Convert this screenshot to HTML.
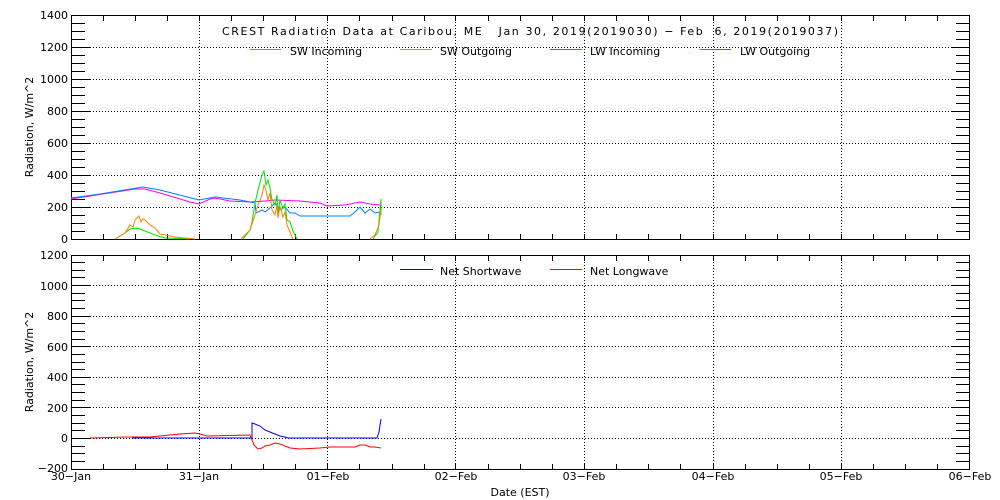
<!DOCTYPE html>
<html><head><style>
html,body{margin:0;padding:0;background:#fff;}
svg{display:block;font-family:"DejaVu Sans","Liberation Sans",sans-serif;}
text{font-size:11px;fill:#000;white-space:pre;}
</style></head><body>
<svg width="1000" height="500" viewBox="0 0 1000 500" xmlns="http://www.w3.org/2000/svg" xml:space="preserve">
<rect width="1000" height="500" fill="#fff"/>
<g stroke="#000" stroke-width="1" fill="none" shape-rendering="crispEdges">
<rect x="71.5" y="15.5" width="898" height="224"/>
<rect x="71.5" y="255.5" width="898" height="214"/>
<path d="M71 239.5h19M71 231.5h14M71 223.5h14M71 215.5h14M71 207.5h19M71 199.5h14M71 191.5h14M71 183.5h14M71 175.5h19M71 167.5h14M71 159.5h14M71 151.5h14M71 143.5h19M71 135.5h14M71 127.5h14M71 119.5h14M71 111.5h19M71 103.5h14M71 95.5h14M71 87.5h14M71 79.5h19M71 71.5h14M71 63.5h14M71 55.5h14M71 47.5h19M71 39.5h14M71 31.5h14M71 23.5h14M71 15.5h19"/>
<path transform="translate(1041,0) scale(-1,1)" d="M71 239.5h19M71 231.5h14M71 223.5h14M71 215.5h14M71 207.5h19M71 199.5h14M71 191.5h14M71 183.5h14M71 175.5h19M71 167.5h14M71 159.5h14M71 151.5h14M71 143.5h19M71 135.5h14M71 127.5h14M71 119.5h14M71 111.5h19M71 103.5h14M71 95.5h14M71 87.5h14M71 79.5h19M71 71.5h14M71 63.5h14M71 55.5h14M71 47.5h19M71 39.5h14M71 31.5h14M71 23.5h14M71 15.5h19"/>
<path d="M71 469.5h19M71 461.5h14M71 453.5h14M71 446.5h14M71 438.5h19M71 430.5h14M71 423.5h14M71 415.5h14M71 407.5h19M71 400.5h14M71 392.5h14M71 384.5h14M71 377.5h19M71 369.5h14M71 362.5h14M71 354.5h14M71 346.5h19M71 339.5h14M71 331.5h14M71 323.5h14M71 316.5h19M71 308.5h14M71 300.5h14M71 293.5h14M71 285.5h19M71 277.5h14M71 270.5h14M71 262.5h14M71 255.5h19"/>
<path transform="translate(1041,0) scale(-1,1)" d="M71 469.5h19M71 461.5h14M71 453.5h14M71 446.5h14M71 438.5h19M71 430.5h14M71 423.5h14M71 415.5h14M71 407.5h19M71 400.5h14M71 392.5h14M71 384.5h14M71 377.5h19M71 369.5h14M71 362.5h14M71 354.5h14M71 346.5h19M71 339.5h14M71 331.5h14M71 323.5h14M71 316.5h19M71 308.5h14M71 300.5h14M71 293.5h14M71 285.5h19M71 277.5h14M71 270.5h14M71 262.5h14M71 255.5h19"/>
<path d="M103.5 16v5M135.5 16v5M167.5 16v5M231.5 16v5M263.5 16v5M295.5 16v5M359.5 16v5M392.5 16v5M424.5 16v5M488.5 16v5M520.5 16v5M552.5 16v5M616.5 16v5M648.5 16v5M680.5 16v5M745.5 16v5M777.5 16v5M809.5 16v5M873.5 16v5M905.5 16v5M937.5 16v5M199.5 16v5M327.5 16v5M455.5 16v5M584.5 16v5M713.5 16v5M841.5 16v5"/>
<path transform="translate(0,240)" d="M103.5 16v5M135.5 16v5M167.5 16v5M231.5 16v5M263.5 16v5M295.5 16v5M359.5 16v5M392.5 16v5M424.5 16v5M488.5 16v5M520.5 16v5M552.5 16v5M616.5 16v5M648.5 16v5M680.5 16v5M745.5 16v5M777.5 16v5M809.5 16v5M873.5 16v5M905.5 16v5M937.5 16v5M199.5 16v5M327.5 16v5M455.5 16v5M584.5 16v5M713.5 16v5M841.5 16v5"/>
<path d="M103.5 239v-5M135.5 239v-5M167.5 239v-5M231.5 239v-5M263.5 239v-5M295.5 239v-5M359.5 239v-5M392.5 239v-5M424.5 239v-5M488.5 239v-5M520.5 239v-5M552.5 239v-5M616.5 239v-5M648.5 239v-5M680.5 239v-5M745.5 239v-5M777.5 239v-5M809.5 239v-5M873.5 239v-5M905.5 239v-5M937.5 239v-5M199.5 239v-5M327.5 239v-5M455.5 239v-5M584.5 239v-5M713.5 239v-5M841.5 239v-5"/>
<path transform="translate(0,230)" d="M103.5 239v-5M135.5 239v-5M167.5 239v-5M231.5 239v-5M263.5 239v-5M295.5 239v-5M359.5 239v-5M392.5 239v-5M424.5 239v-5M488.5 239v-5M520.5 239v-5M552.5 239v-5M616.5 239v-5M648.5 239v-5M680.5 239v-5M745.5 239v-5M777.5 239v-5M809.5 239v-5M873.5 239v-5M905.5 239v-5M937.5 239v-5M199.5 239v-5M327.5 239v-5M455.5 239v-5M584.5 239v-5M713.5 239v-5M841.5 239v-5"/>
</g>
<g stroke="#000" stroke-width="1" stroke-dasharray="1 2" shape-rendering="crispEdges">
<line x1="72" y1="207.5" x2="969" y2="207.5"/><line x1="72" y1="175.5" x2="969" y2="175.5"/>
<line x1="72" y1="143.5" x2="969" y2="143.5"/><line x1="72" y1="111.5" x2="969" y2="111.5"/>
<line x1="72" y1="79.5" x2="969" y2="79.5"/><line x1="72" y1="47.5" x2="969" y2="47.5"/>
<line x1="72" y1="438.5" x2="969" y2="438.5"/><line x1="72" y1="407.5" x2="969" y2="407.5"/>
<line x1="72" y1="377.5" x2="969" y2="377.5"/><line x1="72" y1="346.5" x2="969" y2="346.5"/>
<line x1="72" y1="316.5" x2="969" y2="316.5"/><line x1="72" y1="285.5" x2="969" y2="285.5"/>
<line x1="199.5" y1="16" x2="199.5" y2="239"/><line x1="327.5" y1="16" x2="327.5" y2="239"/>
<line x1="455.5" y1="16" x2="455.5" y2="239"/><line x1="584.5" y1="16" x2="584.5" y2="239"/>
<line x1="713.5" y1="16" x2="713.5" y2="239"/><line x1="841.5" y1="16" x2="841.5" y2="239"/>
<line x1="199.5" y1="256" x2="199.5" y2="469"/><line x1="327.5" y1="256" x2="327.5" y2="469"/>
<line x1="455.5" y1="256" x2="455.5" y2="469"/><line x1="584.5" y1="256" x2="584.5" y2="469"/>
<line x1="713.5" y1="256" x2="713.5" y2="469"/><line x1="841.5" y1="256" x2="841.5" y2="469"/>
</g>
<g fill="none" stroke-width="1">
<polyline stroke="#ff00ff" points="71,199 103,194 135,189 145,189 160,193 190,202 199,204 210,199 215,198 230,201 250,202 265,201 275,200 300,201 320,203 327,206 345,205 360,202 370,204 380,205"/>
<polyline stroke="#0080ff" points="71,198 100,194 143,187 160,190 199,200 215,197 240,200 250,202 255,203 256,213 262,210 265,212 270,208 275,203 280,210 285,207 290,213 295,213 300,216 310,216 350,216 355,212 360,207 365,213 370,209 375,213 380,212"/>
<polyline stroke="#00e000" points="115,239 125,233 130,229 135,228 140,229 145,231 155,235 165,238 190,239"/>
<polyline stroke="#00e000" points="243,239 250,230 252,222 255,203 258,190 262,175 264,171 266,185 268,180 270,188 272,200 275,205 277,195 278,215 280,200 283,208 285,204 287,220 290,222 293,231 297,239"/>
<polyline stroke="#00e000" points="373,239 378,232 380,210 381,199 381,215"/>
<polyline stroke="#ff8000" points="115,239 125,233 130,225 133,227 135,220 139,216 141,222 143,219 145,220 150,225 155,228 160,234 175,237 195,239"/>
<polyline stroke="#ff8000" points="241,239 250,230 255,215 258,205 262,195 264,185 266,190 268,200 270,193 272,210 275,215 277,205 278,218 280,206 283,217 285,212 287,225 290,232 293,239"/>
<polyline stroke="#ff8000" points="370,239 375,235 379,225 381,210"/>
<polyline stroke="#0000ff" points="132,438 251,438 252,439 252,423 255,424 260,426 265,430 270,432 275,434 280,436 285,437 288,438 377,438 379,432 381,419"/>
<polyline stroke="#ff0000" points="90,438 130,437 150,437 180,434 195,433 200,434 207,436 250,435 252,440 254,445 258,449 262,448 265,446 270,445 275,443 280,444 285,446 290,448 300,449 320,448 330,447 340,447 355,447 360,445 365,445 370,447 375,447 381,448"/>
</g>
<g text-anchor="end">
<text x="68" y="19">1400</text><text x="68" y="51">1200</text><text x="68" y="83">1000</text>
<text x="68" y="115">800</text><text x="68" y="147">600</text><text x="68" y="179">400</text>
<text x="68" y="211">200</text><text x="68" y="243">0</text>
<text x="68" y="259">1200</text><text x="68" y="290">1000</text><text x="68" y="320">800</text>
<text x="68" y="351">600</text><text x="68" y="381">400</text><text x="68" y="412">200</text>
<text x="68" y="442">0</text><text x="68" y="472">−200</text>
</g>
<text transform="translate(33,127) rotate(-90)" text-anchor="middle" font-size="12">Radiation, W/m^2</text>
<text transform="translate(33,362) rotate(-90)" text-anchor="middle" font-size="12">Radiation, W/m^2</text>
<g text-anchor="middle">
<text x="71" y="480">30−Jan</text><text x="199" y="480">31−Jan</text><text x="328" y="480">01−Feb</text>
<text x="456" y="480">02−Feb</text><text x="584" y="480">03−Feb</text><text x="713" y="480">04−Feb</text>
<text x="841" y="480">05−Feb</text><text x="970" y="480">06−Feb</text>
<text x="520" y="496" font-size="12">Date (EST)</text>
</g>
<text x="530" y="35" text-anchor="middle" font-size="14" textLength="616" lengthAdjust="spacing">CREST Radiation Data at Caribou, ME   Jan 30, 2019(2019030) − Feb  6, 2019(2019037)</text>
<g stroke-width="1.2" shape-rendering="crispEdges">
<line x1="250" y1="49.5" x2="281" y2="49.5" stroke="#00e000"/>
<line x1="400" y1="49.5" x2="432" y2="49.5" stroke="#ff8000"/>
<line x1="550" y1="49.5" x2="582" y2="49.5" stroke="#0080ff"/>
<line x1="700" y1="49.5" x2="731" y2="49.5" stroke="#ff00ff"/>
<line x1="400" y1="269.5" x2="433" y2="269.5" stroke="#0000ff"/>
<line x1="550" y1="269.5" x2="582" y2="269.5" stroke="#ff0000"/>
</g>
<text x="290" y="55">SW Incoming</text>
<text x="440" y="55">SW Outgoing</text>
<text x="590" y="55">LW Incoming</text>
<text x="740" y="55">LW Outgoing</text>
<text x="440" y="275">Net Shortwave</text>
<text x="590" y="275">Net Longwave</text>
</svg>
</body></html>
